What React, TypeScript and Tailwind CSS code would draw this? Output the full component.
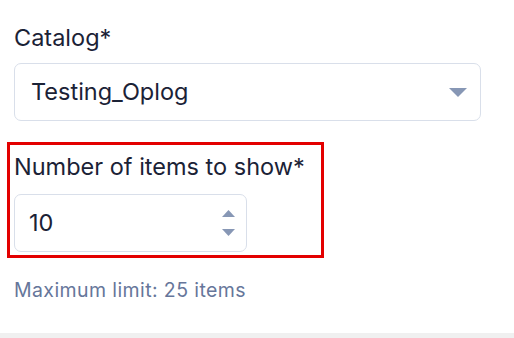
export default function App() {
  return (
    <div
      className="relative flex h-[338px] w-full flex-col overflow-hidden bg-white px-[14px] text-[#1b2236]"
      style={{ fontFamily: "Inter, 'Noto Sans', sans-serif" }}
    >
      <label className="mt-[24px] text-[23.5px] leading-[28px]">Catalog*</label>
      <div className="mt-[11px] flex h-[58px] w-[467px] items-center justify-between rounded-[7px] border border-[#d9dfea] pl-[16px] pr-[13px]">
        <span className="text-[23.5px] leading-[28px]">Testing_Oplog</span>
        <svg width="18" height="9" viewBox="0 0 18 9">
          <path d="M0 0 H18 L9 9 Z" fill="#8797b5" />
        </svg>
      </div>

      <div className="-ml-[7px] mt-[21px] flex w-[317px] flex-col border-[3px] border-[#e30000] px-[4px] pb-[3px] pt-[8px]">
        <label className="text-[23.5px] leading-[28px]">Number of items to show*</label>
        <div className="mt-[13px] flex h-[58px] w-[233px] items-center justify-between rounded-[7px] border border-[#d9dfea] pl-[14px] pr-[11px]">
          <span className="text-[23.5px] leading-[28px]">10</span>
          <div className="flex flex-col gap-[12px]">
            <svg width="13" height="7" viewBox="0 0 13 7">
              <path d="M6.5 0 L13 7 H0 Z" fill="#8797b5" />
            </svg>
            <svg width="13" height="7" viewBox="0 0 13 7">
              <path d="M0 0 H13 L6.5 7 Z" fill="#8797b5" />
            </svg>
          </div>
        </div>
      </div>

      <p className="mt-[20px] text-[19.5px] leading-[24px] tracking-[0.4px] text-[#66769a]">
        Maximum limit: 25 items
      </p>

      <div className="absolute bottom-0 left-0 h-[5px] w-full bg-[#f0f0f0]" />
    </div>
  );
}
